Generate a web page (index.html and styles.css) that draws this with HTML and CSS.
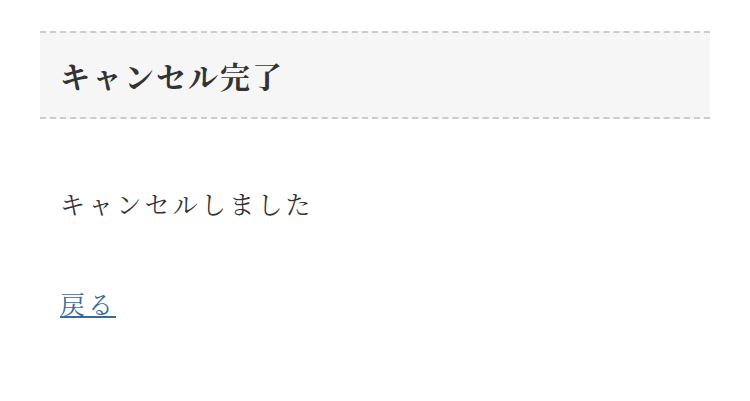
FILE: index.html
```html
<!DOCTYPE html>
<html lang="ja">
<head>
    <meta charset="UTF-8">
    <meta name="viewport" content="width=device-width, initial-scale=1.0">
    <title>キャンセル完了</title>
    <link rel="stylesheet" href="styles.css">
</head>
<body>
    <div class="container">
        <h1 class="page-title">キャンセル完了</h1>

        <div class="content">
            <p class="message">キャンセルしました</p>
            <p class="back"><a href="#">戻る</a></p>
        </div>
    </div>
</body>
</html>
```

FILE: styles.css
```css
* {
    margin: 0;
    padding: 0;
    box-sizing: border-box;
}

body {
    font-family: "Noto Serif CJK JP", "Liberation Serif", "Noto Sans CJK JP", serif;
    color: #333;
    background-color: #fff;
}

.container {
    padding: 31px 40px 0;
}

.page-title {
    background-color: #f6f6f6;
    border-top: 2px dashed #ccc;
    border-bottom: 2px dashed #ccc;
    padding: 0 20px;
    height: 88px;
    line-height: 84px;
    font-size: 30px;
    font-weight: bold;
    letter-spacing: 2px;
}

.content {
    padding: 0 20px;
}

.message {
    margin-top: 66px;
    font-size: 25px;
    line-height: 36px;
    letter-spacing: 3.2px;
}

.back {
    margin-top: 64px;
    font-size: 25px;
    line-height: 36px;
    letter-spacing: 3px;
}

.back a {
    color: #3a6a9a;
}
```
